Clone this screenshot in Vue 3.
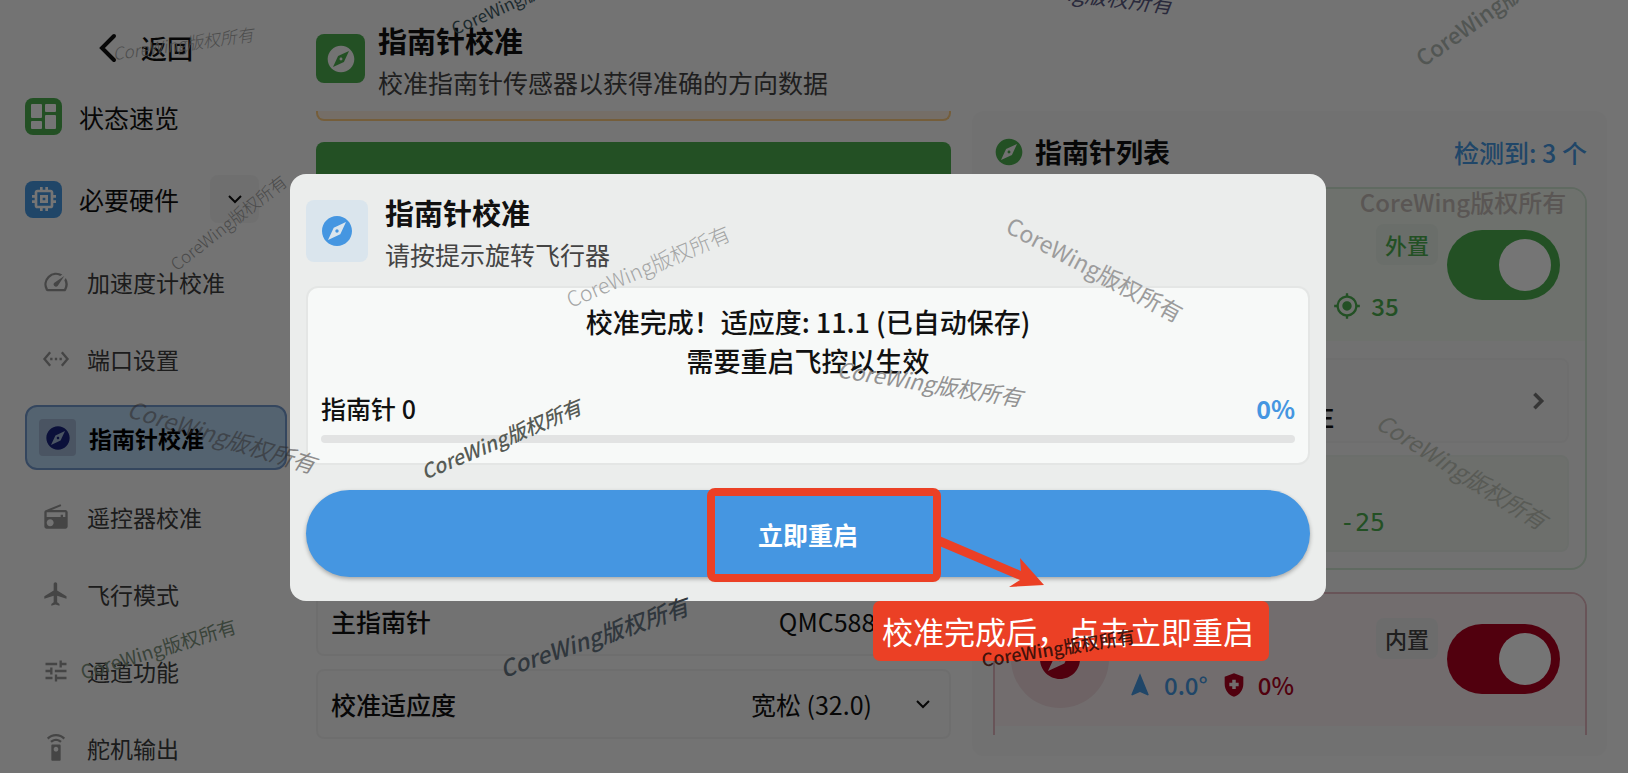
<template>
  <div class="page">
    <aside class="sidebar">
      <button class="back" type="button">
        <svg class="back-arrow" viewBox="0 0 20 32"><path d="M16 4L4 16l12 12" /></svg>
        <span>返回</span>
      </button>
      <nav class="menu">
        <a class="menu-item" href="#">
          <svg class="tile green" viewBox="0 0 37 37">
            <rect x="6" y="6" width="11" height="14" rx="1" />
            <rect x="20" y="6" width="11" height="8" rx="1" />
            <rect x="6" y="23" width="11" height="8" rx="1" />
            <rect x="20" y="17" width="11" height="14" rx="1" />
          </svg>
          <span>状态速览</span>
        </a>
        <div class="menu-group">
          <a class="menu-item" href="#">
            <span class="tile blue">
              <svg class="icon-32" viewBox="0 0 24 24"><path :d="icons.memory" /></svg>
            </span>
            <span>必要硬件</span>
          </a>
          <button class="expand" type="button" aria-label="收起">
            <svg class="chevron" viewBox="0 0 20 20"><path d="M4 7l6 6 6-6" /></svg>
          </button>
        </div>
        <div class="submenu">
          <a
            v-for="item in subMenu"
            :key="item.label"
            class="sub-item"
            :class="{ active: item.active }"
            href="#"
          >
            <span class="sub-icon">
              <svg class="icon-28" viewBox="0 0 24 24"><path :d="icons[item.icon]" /></svg>
            </span>
            <span>{{ item.label }}</span>
          </a>
        </div>
      </nav>
    </aside>

    <main class="main">
      <header class="page-header">
        <span class="header-icon">
          <svg class="icon-32" viewBox="0 0 24 24"><path :d="icons.compass" /></svg>
        </span>
        <div>
          <h1>指南针校准</h1>
          <p>校准指南针传感器以获得准确的方向数据</p>
        </div>
      </header>

      <div class="columns">
        <section class="left-column">
          <div class="notice"></div>
          <button class="start-button" type="button">开始校准</button>
          <div class="settings">
            <label class="setting">
              <span>主指南针</span>
              <select class="wide"><option>QMC5883P</option></select>
            </label>
            <label class="setting">
              <span>校准适应度</span>
              <select><option>宽松 (32.0)</option></select>
              <svg class="chevron" viewBox="0 0 20 20"><path d="M4 7l6 6 6-6" /></svg>
            </label>
          </div>
        </section>

        <section class="panel">
          <div class="panel-header">
            <svg class="icon-32" viewBox="0 0 24 24"><path :d="icons.compass" /></svg>
            <h2>指南针列表</h2>
            <span class="count">检测到: 3 个</span>
          </div>
          <div class="device-list">
            <article class="device external">
              <div class="device-head">
                <span class="avatar">
                  <svg class="icon-48" viewBox="0 0 24 24"><path :d="icons.compass" /></svg>
                </span>
                <div class="device-info">
                  <div class="device-name">
                    <strong>QMC5883P<br />#1</strong>
                    <span class="badge">外置</span>
                  </div>
                  <div class="values">
                    <span class="value heading"><svg class="icon-28" viewBox="0 0 24 24"><path :d="icons.navigation" /></svg>359.0°</span>
                    <span class="value"><svg class="icon-28" viewBox="0 0 24 24"><path :d="icons.shield" /></svg>0%</span>
                    <span class="value"><svg class="icon-28" viewBox="0 0 24 24"><path :d="icons.target" /></svg>35</span>
                  </div>
                </div>
                <input v-model="externalOn" class="switch" type="checkbox" aria-label="外置指南针" />
              </div>
              <div class="device-body">
                <button class="rotation" type="button">
                  <span class="rotation-text">
                    <small>安装方向</small>
                    <span>方向: ROTATION_NONE</span>
                  </span>
                  <svg class="chevron large" viewBox="0 0 20 20"><path d="M7 4l6 6-6 6" /></svg>
                </button>
                <div class="offsets">
                  <span class="offsets-label">偏移量</span>
                  <span class="offsets-value">X: 125 Y: -88 Z: -25</span>
                </div>
              </div>
            </article>

            <article class="device internal">
              <div class="device-head">
                <span class="avatar">
                  <svg class="icon-48" viewBox="0 0 24 24"><path :d="icons.compass" /></svg>
                </span>
                <div class="device-info">
                  <div class="device-name">
                    <strong>IST8310</strong>
                    <span class="badge">内置</span>
                  </div>
                  <div class="values">
                    <span class="value heading"><svg class="icon-28" viewBox="0 0 24 24"><path :d="icons.navigation" /></svg>0.0°</span>
                    <span class="value"><svg class="icon-28" viewBox="0 0 24 24"><path :d="icons.shield" /></svg>0%</span>
                  </div>
                </div>
                <input v-model="internalOn" class="switch" type="checkbox" aria-label="内置指南针" />
              </div>
              <div class="device-body"></div>
            </article>
          </div>
        </section>
      </div>
    </main>

    <div class="backdrop">
      <div class="dialog" role="dialog" aria-labelledby="dialog-title">
        <div class="dialog-header">
          <span class="dialog-icon">
            <svg class="icon-36" viewBox="0 0 24 24"><path :d="icons.compass" /></svg>
          </span>
          <div>
            <h2 id="dialog-title">指南针校准</h2>
            <p>请按提示旋转飞行器</p>
          </div>
        </div>
        <div class="result">
          <p class="result-text">校准完成！适应度: 11.1 (已自动保存)<br />需要重启飞控以生效</p>
          <div class="progress-label">
            <span>指南针 0</span>
            <strong>{{ progress }}%</strong>
          </div>
          <div class="progress"><div class="progress-bar" :style="{ width: progress + '%' }"></div></div>
        </div>
        <div class="reboot-wrap">
          <button class="reboot" type="button">立即重启</button>
          <div class="callout">
            <svg class="arrow" viewBox="0 0 110 60">
              <path d="M0 2L84 38L83 25L107 52L72 54L83 47L0 12Z" />
            </svg>
            <div class="callout-label">校准完成后，点击立即重启</div>
          </div>
        </div>
      </div>
    </div>

    <div class="watermarks" aria-hidden="true">
      <span v-for="(mark, i) in watermarks" :key="i" class="watermark" :style="markStyle(mark)">CoreWing版权所有</span>
    </div>
  </div>
</template>

<script setup>
import { ref } from 'vue'

const externalOn = ref(true)
const internalOn = ref(true)
const progress = ref(0)

const icons = {
  compass: 'M12 10.9c-.61 0-1.1.49-1.1 1.1s.49 1.1 1.1 1.1c.61 0 1.1-.49 1.1-1.1s-.49-1.1-1.1-1.1zM12 2C6.48 2 2 6.48 2 12s4.48 10 10 10 10-4.48 10-10S17.52 2 12 2zm2.19 12.19L6 18l3.81-8.19L18 6l-3.81 8.19z',
  memory: 'M15 9H9v6h6V9zm-2 4h-2v-2h2v2zm8-2V9h-2V7c0-1.1-.9-2-2-2h-2V3h-2v2h-2V3H9v2H7c-1.1 0-2 .9-2 2v2H3v2h2v2H3v2h2v2c0 1.1.9 2 2 2h2v2h2v-2h2v2h2v-2h2c1.1 0 2-.9 2-2v-2h2v-2h-2v-2h2zm-4 6H7V7h10v10z',
  speed: 'M20.38 8.57l-1.23 1.85a8 8 0 0 1-.22 7.58H5.07A8 8 0 0 1 15.58 6.85l1.85-1.23A10 10 0 0 0 3.35 19a2 2 0 0 0 1.72 1h13.85a2 2 0 0 0 1.74-1 10 10 0 0 0-.27-10.44zM10.59 15.41a2 2 0 0 0 2.83 0l5.66-8.49-8.49 5.66a2 2 0 0 0 0 2.83z',
  port: 'M7.77 6.76L6.23 5.48.82 12l5.41 6.52 1.54-1.28L3.42 12l4.35-5.24zM7 13h2v-2H7v2zm10-2h-2v2h2v-2zm-6 2h2v-2h-2v2zm6.77-7.52l-1.54 1.28L20.58 12l-4.35 5.24 1.54 1.28L23.18 12l-5.41-6.52z',
  radio: 'M3.24 6.15C2.51 6.43 2 7.17 2 8v12c0 1.1.89 2 2 2h16c1.11 0 2-.9 2-2V8c0-1.11-.89-2-2-2H8.3l8.26-3.34L15.88 1 3.24 6.15zM7 20c-1.66 0-3-1.34-3-3s1.34-3 3-3 3 1.34 3 3-1.34 3-3 3zm13-8h-2v-2h-2v2H4V8h16v4z',
  flight: 'M21 16v-2l-8-5V3.5c0-.83-.67-1.5-1.5-1.5S10 2.67 10 3.5V9l-8 5v2l8-2.5V19l-2 1.5V22l3.5-1 3.5 1v-1.5L13 19v-5.5l8 2.5z',
  tune: 'M3 17v2h6v-2H3zM3 5v2h10V5H3zm10 16v-2h8v-2h-8v-2h-2v6h2zM7 9v2H3v2h4v2h2V9H7zm14 4v-2H11v2h10zm-6-4h2V7h4V5h-4V3h-2v6z',
  remote: 'M15 9H9c-.55 0-1 .45-1 1v12c0 .55.45 1 1 1h6c.55 0 1-.45 1-1V10c0-.55-.45-1-1-1zm-3 6c-1.1 0-2-.9-2-2s.9-2 2-2 2 .9 2 2-.9 2-2 2zM7.05 6.05l1.41 1.41C9.37 6.56 10.62 6 12 6s2.63.56 3.54 1.46l1.41-1.41C15.68 4.78 13.93 4 12 4s-3.68.78-4.95 2.05zM12 0C8.96 0 6.21 1.23 4.22 3.22l1.41 1.41C7.26 3.01 9.51 2 12 2s4.74 1.01 6.36 2.64l1.41-1.41C17.79 1.23 15.04 0 12 0z',
  target: 'M12 8c-2.21 0-4 1.79-4 4s1.79 4 4 4 4-1.79 4-4-1.79-4-4-4zm8.94 3A8.994 8.994 0 0 0 13 3.06V1h-2v2.06A8.994 8.994 0 0 0 3.06 11H1v2h2.06A8.994 8.994 0 0 0 11 20.94V23h2v-2.06A8.994 8.994 0 0 0 20.94 13H23v-2h-2.06zM12 19c-3.87 0-7-3.13-7-7s3.13-7 7-7 7 3.13 7 7-3.13 7-7 7z',
  navigation: 'M12 2L4.5 20.29l.71.71L12 18l6.79 3 .71-.71z',
  shield: 'M10.5 13H8v-3h2.5V7.5h3V10H16v3h-2.5v2.5h-3V13zM12 2L4 5v6.09c0 5.05 3.41 9.76 8 10.91 4.59-1.15 8-5.86 8-10.91V5l-8-3z'
}

const subMenu = [
  { label: '加速度计校准', icon: 'speed' },
  { label: '端口设置', icon: 'port' },
  { label: '指南针校准', icon: 'compass', active: true },
  { label: '遥控器校准', icon: 'radio' },
  { label: '飞行模式', icon: 'flight' },
  { label: '通道功能', icon: 'tune' },
  { label: '舵机输出', icon: 'remote' }
]

// x / y 为水印中心点
const watermarks = [
  { x: 183, y: 43, angle: -8, size: 17, color: '#4c4c4c', weight: 300, italic: true },
  { x: 518, y: -1, angle: -24, size: 17, color: '#1c2a2e' },
  { x: 1080, y: -8, angle: 7, size: 22, color: '#2a2a3c', italic: true },
  { x: 1495, y: 5, angle: -35, size: 22, color: '#525653', weight: 500 },
  { x: 228, y: 222, angle: -38, size: 17, color: '#4a4a4a', weight: 300 },
  { x: 1463, y: 202, angle: 0, size: 24, color: '#5a5654', weight: 500 },
  { x: 648, y: 266, angle: -23, size: 21, color: '#a4a5a5', weight: 300 },
  { x: 1095, y: 269, angle: 28, size: 23, color: '#9c9c9c' },
  { x: 930, y: 382, angle: 9, size: 22, color: '#929292', italic: true },
  { x: 501, y: 439, angle: -23, size: 20, color: '#565b55', weight: 500, italic: true },
  { x: 222, y: 436, angle: 17, size: 23, color: 'rgba(42, 37, 37, 0.5)', italic: true },
  { x: 594, y: 637, angle: -19, size: 23, color: '#30373d', weight: 500, italic: true },
  { x: 158, y: 648, angle: -17, size: 19, color: '#3a443a' },
  { x: 1058, y: 647, angle: -9, size: 18, color: 'rgba(45, 12, 8, 0.9)', weight: 500 },
  { x: 1462, y: 471, angle: 32, size: 23, color: '#595b56', italic: true }
]

const markStyle = (mark) => ({
  left: mark.x + 'px',
  top: mark.y + 'px',
  color: mark.color,
  fontSize: mark.size + 'px',
  fontWeight: mark.weight || 400,
  fontStyle: mark.italic ? 'italic' : 'normal',
  transform: `translate(-50%, -50%) rotate(${mark.angle}deg)`
})
</script>

<style>
body {
  margin: 0;
  background: #fafafa;
}
</style>

<style scoped>
.page {
  position: relative;
  display: grid;
  grid-template-columns: 290px 1fr;
  height: 100vh;
  overflow: hidden;
  background: #fafafa;
  color: #111;
  font-family: "Noto Sans CJK SC", "Noto Sans", sans-serif;
  font-size: 25px;
  line-height: 36px;
}

.page * {
  box-sizing: border-box;
}

h1,
h2,
p {
  margin: 0;
}

a {
  color: inherit;
  text-decoration: none;
}

button,
select {
  padding: 0;
  border: 0;
  background: none;
  color: inherit;
  font: inherit;
  cursor: pointer;
}

svg {
  flex: none;
  fill: currentColor;
}

.icon-28 {
  width: 28px;
  height: 28px;
}

.icon-32 {
  width: 32px;
  height: 32px;
}

.icon-36 {
  width: 36px;
  height: 36px;
}

.icon-48 {
  width: 48px;
  height: 48px;
}

.chevron {
  width: 20px;
  height: 20px;
  fill: none;
  stroke: currentColor;
  stroke-width: 2;
}

.chevron.large {
  width: 24px;
  height: 24px;
  color: #777;
  stroke-width: 3;
}

/* 侧边栏 */
.sidebar {
  padding: 30px 3px 0 25px;
  overflow: hidden;
}

.back {
  display: flex;
  align-items: center;
  gap: 23px;
  margin-left: 73px;
  font-size: 26px;
  font-weight: 500;
}

.back-arrow {
  width: 20px;
  height: 32px;
  fill: none;
  stroke: currentColor;
  stroke-width: 4;
  stroke-linecap: round;
}

.menu {
  margin-top: 32px;
}

.menu-item {
  display: flex;
  align-items: center;
  gap: 17px;
}

.menu-group {
  display: flex;
  align-items: center;
  justify-content: space-between;
  height: 48px;
  margin-top: 40px;
  padding-right: 28px;
}

.tile {
  display: flex;
  align-items: center;
  justify-content: center;
  width: 37px;
  height: 37px;
  border-radius: 8px;
  color: #fff;
}

.green {
  background: #4caf50;
}

.blue {
  background: #4698e2;
}

.expand {
  display: flex;
  align-items: center;
  justify-content: center;
  width: 49px;
  height: 48px;
  border-radius: 8px;
  background: #f2f2f2;
}

.submenu {
  display: flex;
  flex-direction: column;
  gap: 16px;
  margin-top: 28px;
}

.sub-item {
  display: flex;
  flex: none;
  align-items: center;
  gap: 13px;
  height: 61px;
  padding-left: 12px;
  color: #3d3d3d;
  font-size: 23px;
}

.sub-icon {
  display: flex;
  align-items: center;
  justify-content: center;
  width: 37px;
  height: 37px;
  border-radius: 4px;
  color: #969696;
}

.sub-item.active {
  height: 65px;
  border: 2px solid #7198ce;
  border-radius: 12px;
  background: #b7d7f3;
  color: #000;
  font-weight: 700;
}

.active .sub-icon {
  background: #a1b7d5;
  color: #1a237e;
}

/* 主区域 */
.main {
  display: flex;
  flex-direction: column;
  min-width: 0;
  height: 100vh;
  padding: 0 21px 0 26px;
}

.page-header {
  display: flex;
  flex: none;
  align-items: flex-start;
  gap: 13px;
  height: 111px;
  padding-top: 19px;
}

.header-icon {
  display: flex;
  align-items: center;
  justify-content: center;
  width: 49px;
  height: 49px;
  margin-top: 15px;
  border-radius: 8px;
  background: #4caf50;
  color: #fafafa;
}

h1,
.dialog h2 {
  font-size: 29px;
  font-weight: 700;
  line-height: 42px;
}

.page-header p,
.dialog-header p {
  color: #444;
  line-height: 42px;
}

.columns {
  display: grid;
  flex: 1;
  grid-template-rows: minmax(0, 1fr);
  grid-template-columns: 1fr 1fr;
  gap: 21px;
  min-height: 0;
}

.left-column {
  display: flex;
  flex-direction: column;
  padding-bottom: 34px;
}

.notice {
  height: 10px;
  border: 2px solid #ffcc80;
  border-top: 0;
  border-radius: 0 0 8px 8px;
  background: #fff0e0;
}

.start-button {
  height: 86px;
  margin-top: 21px;
  border-radius: 8px;
  background: #4caf50;
  color: #fff;
}

.settings {
  display: flex;
  flex-direction: column;
  gap: 13px;
  margin-top: auto;
}

.setting {
  display: flex;
  align-items: center;
  gap: 41px;
  height: 70px;
  padding: 0 16px 0 13px;
  border: 2px solid #f0f0f0;
  border-radius: 8px;
  background: #f8f8f8;
}

.setting > span {
  flex: 1;
  font-weight: 500;
}

.setting select {
  appearance: none;
  text-align-last: right;
}

.setting .wide {
  margin-right: 28px;
}

/* 指南针列表 */
.panel {
  display: flex;
  flex-direction: column;
  min-width: 0;
  margin-bottom: 17px;
  padding: 21px 20px 21px 21px;
  border-radius: 12px;
  background: #f6f6f6;
}

.panel-header {
  display: flex;
  flex: none;
  align-items: center;
  gap: 10px;
  height: 40px;
  margin-bottom: 15px;
  color: #4caf50;
}

.panel-header h2 {
  flex: 1;
  color: #111;
  font-size: 27px;
  font-weight: 700;
}

.count {
  color: #4698e2;
  font-weight: 500;
}

.device-list {
  display: flex;
  flex: 1;
  flex-direction: column;
  gap: 22px;
  overflow: hidden;
}

.device {
  flex: none;
  overflow: hidden;
  border: 2px solid;
  border-radius: 16px;
  background: #f7f7f7;
}

.external {
  border-color: #d2e6d4;
}

.internal {
  border-color: #e3b8c0;
}

.device-head {
  display: flex;
  align-items: center;
  padding: 16px 25px 18px 16px;
}

.external .device-head {
  padding-top: 19px;
  padding-bottom: 19px;
  color: #4caf50;
  background: #f0f6ee;
}

.internal .device-head {
  color: #b00020;
  background: #f8eef0;
}

.avatar {
  display: flex;
  align-items: center;
  justify-content: center;
  width: 98px;
  height: 98px;
  border-radius: 50%;
  background: #efd8dc;
}

.external .avatar {
  background: #d8ecd9;
}

.device-info {
  flex: 1;
  margin-left: 17px;
}

.device-name {
  display: flex;
  align-items: center;
  justify-content: space-between;
}

.device-name strong {
  color: #111;
}

.badge {
  margin-right: 9px;
  padding: 2px 9px 3px;
  border-radius: 8px;
  background: #e6efe6;
  font-size: 22px;
  font-weight: 500;
}

.internal .badge {
  background: #ececec;
  color: #444;
}

.values {
  display: flex;
  gap: 12px;
  height: 32px;
  margin-top: 10px;
  font-size: 24px;
  font-weight: 500;
}

.value {
  display: flex;
  align-items: center;
  gap: 10px;
}

.heading {
  color: #4698e2;
}

.switch {
  flex: none;
  width: 113px;
  height: 70px;
  margin: 0;
  padding: 9px;
  border-radius: 35px;
  appearance: none;
  background: #bbb;
}

.switch::before {
  display: block;
  width: 52px;
  height: 52px;
  border-radius: 50%;
  background: #fff;
  content: "";
}

.switch:checked {
  background: #4caf50;
}

.internal .switch:checked {
  background: #b00020;
}

.switch:checked::before {
  margin-left: auto;
}

.device-body {
  display: flex;
  flex-direction: column;
  gap: 12px;
  padding: 17px 16px 16px;
}

.rotation {
  display: flex;
  align-items: center;
  justify-content: space-between;
  height: 85px;
  padding: 0 17px 0 51px;
  border: 2px solid #efefef;
  border-radius: 8px;
  background: #f4f4f4;
  text-align: left;
}

.rotation-text {
  display: flex;
  flex-direction: column;
  font-weight: 500;
  line-height: 33px;
}

.rotation-text small {
  font-size: 22px;
}

.offsets {
  display: flex;
  flex-direction: column;
  height: 97px;
  padding: 12px 16px 12px 71px;
  border: 2px solid #e9efe9;
  border-radius: 8px;
  background: #eef2ec;
  color: #4caf50;
}

.offsets-value {
  font-family: "DejaVu Sans Mono", monospace;
}

/* 弹窗 */
.backdrop {
  position: absolute;
  inset: 0;
  display: flex;
  align-items: center;
  padding: 2px 302px 0 290px;
  background: rgba(0, 0, 0, 0.54);
}

.dialog {
  width: 100%;
  padding: 26px 16px 24px;
  border-radius: 16px;
  background: #ebedec;
}

.dialog-header {
  display: flex;
  align-items: flex-start;
  gap: 17px;
}

.dialog-header > div {
  margin-top: -9px;
}

.dialog-icon {
  display: flex;
  align-items: center;
  justify-content: center;
  width: 62px;
  height: 62px;
  border-radius: 8px;
  background: #dae5ed;
  color: #4596e1;
}

.result {
  margin-top: 11px;
  padding: 14px 13px 20px;
  border: 2px solid #e4e6e5;
  border-radius: 12px;
  background: #f7f9f8;
}

.result-text {
  font-size: 27px;
  font-weight: 500;
  line-height: 39px;
  text-align: center;
}

.progress-label {
  display: flex;
  justify-content: space-between;
  margin-top: 10px;
  font-weight: 500;
}

.progress-label strong {
  color: #4596e1;
}

.progress {
  height: 8px;
  margin-top: 9px;
  overflow: hidden;
  border-radius: 4px;
  background: #e2e3e3;
}

.progress-bar {
  height: 100%;
  background: #4596e1;
}

.reboot-wrap {
  position: relative;
  margin-top: 25px;
}

.reboot {
  display: block;
  width: 100%;
  height: 87px;
  border-radius: 44px;
  background: #4596e1;
  box-shadow: 0 2px 4px rgba(0, 0, 0, 0.3);
  color: #fff;
  font-weight: 700;
}

/* 标注框 */
.callout {
  position: absolute;
  top: -2px;
  left: calc(50% - 101px);
  width: 234px;
  height: 94px;
  border: 8px solid #eb4025;
  border-radius: 8px;
  pointer-events: none;
}

.arrow {
  position: absolute;
  top: 37px;
  left: 222px;
  width: 110px;
  height: 60px;
  fill: #eb4025;
}

.callout-label {
  position: absolute;
  top: 105px;
  left: 158px;
  padding: 7px 15px 8px 9px;
  border-radius: 7px;
  background: #eb4025;
  color: #fff;
  font-size: 31px;
  line-height: 45px;
  white-space: nowrap;
}

.watermarks {
  position: absolute;
  inset: 0;
  overflow: hidden;
  pointer-events: none;
}

.watermark {
  position: absolute;
  line-height: 1;
  white-space: nowrap;
}
</style>
